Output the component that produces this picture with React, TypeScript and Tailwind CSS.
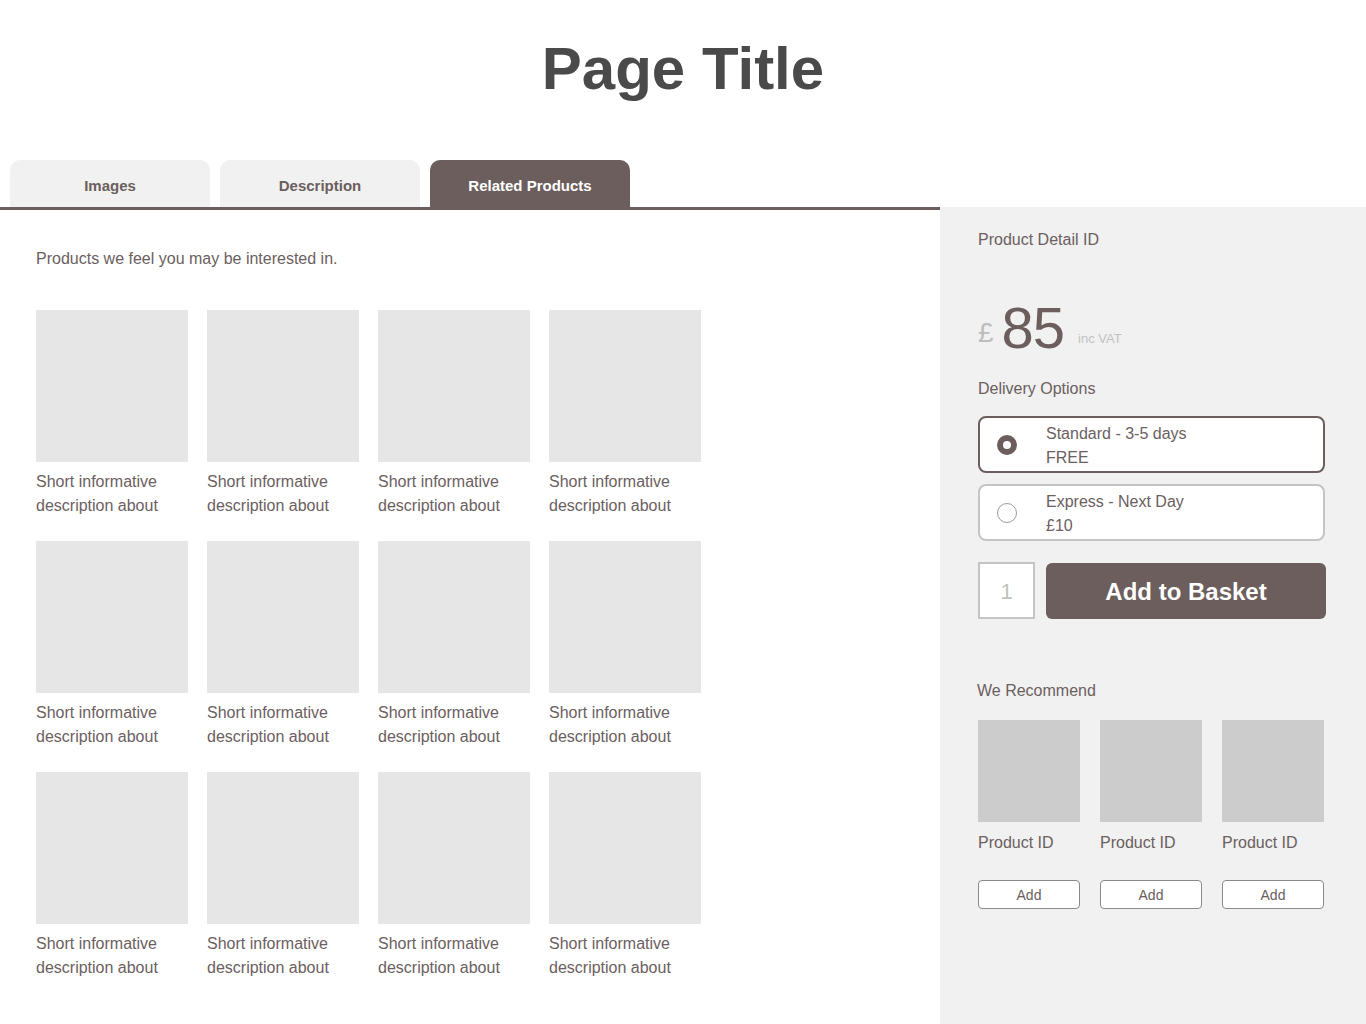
import React from "react";

const tabs = ["Images", "Description", "Related Products"];
const products = Array.from({ length: 12 }, (_, i) => i);
const recommended = [0, 1, 2];

export default function App() {
  return (
    <div
      className="min-h-screen flex flex-col bg-white text-[#6b605f]"
      style={{ fontFamily: '"Liberation Sans", Arial, sans-serif' }}
    >
      {/* Header */}
      <h1 className="pt-[39px] text-center text-[60px] leading-[60px] font-bold text-[#4a4a4a]">
        Page Title
      </h1>

      <div className="flex flex-1 mt-[61px]">
        {/* Left column */}
        <div className="w-[940px] flex flex-col">
          <div className="flex gap-[10px] pl-[10px] h-[47px]">
            {tabs.map((t, i) => (
              <div
                key={t}
                className={`w-[200px] rounded-t-[10px] flex items-center justify-center pt-[6px] text-[15px] font-bold ${
                  i === 2 ? "bg-[#6b5e5d] text-white" : "bg-[#f1f1f1] text-[#6b5e5d]"
                }`}
              >
                {t}
              </div>
            ))}
          </div>
          <div className="border-t-[3px] border-[#6b5e5d] pl-[36px] pt-[37px] pb-10">
            <p className="text-[16px] leading-[24px]">Products we feel you may be interested in.</p>
            <div className="mt-[39px] grid grid-cols-[repeat(4,152px)] gap-x-[19px] gap-y-[23px]">
              {products.map((p) => (
                <div key={p}>
                  <div className="w-[152px] h-[152px] bg-[#e6e6e6]" />
                  <p className="mt-[8px] text-[16px] leading-[24px]">
                    Short informative description about
                  </p>
                </div>
              ))}
            </div>
          </div>
        </div>

        {/* Right panel */}
        <aside className="flex-1 mt-[47px] bg-[#f1f1f1] pl-[38px] pr-[40px] pt-[21px]">
          <p className="text-[16px] leading-[24px]">Product Detail ID</p>

          <div className="mt-[47px] flex items-baseline h-[58px]">
            <span className="relative -top-[6px] text-[28px] leading-none text-[#bdbdbd] mr-[8px]">£</span>
            <span className="text-[58px] leading-[58px] font-light text-[#6b5e5d] tracking-[-1px]">85</span>
            <span className="relative -top-[5px] ml-[14px] text-[13px] leading-none text-[#c2c2c2]">inc VAT</span>
          </div>

          <p className="mt-[20px] text-[16px] leading-[24px]">Delivery Options</p>

          <div className="mt-[15px] flex flex-col gap-[11px] w-[347px]">
            <label className="h-[57px] bg-white border-2 border-[#6b5e5d] rounded-[8px] flex items-center pl-[17px]">
              <span className="w-[20px] h-[20px] rounded-full border-[6px] border-[#6b5e5d] bg-white" />
              <span className="ml-[29px] pt-[3px] text-[16px] leading-[24px]">
                Standard - 3-5 days
                <br />
                FREE
              </span>
            </label>
            <label className="h-[57px] bg-white border-2 border-[#c4c4c4] rounded-[8px] flex items-center pl-[17px]">
              <span className="w-[20px] h-[20px] rounded-full border-[1.5px] border-[#9a9a9a] bg-white" />
              <span className="ml-[29px] pt-[3px] text-[16px] leading-[24px]">
                Express - Next Day
                <br />
                £10
              </span>
            </label>
          </div>

          <div className="mt-[21px] flex gap-[11px] items-start">
            <div className="w-[57px] h-[57px] bg-white border-2 border-[#c4c4c4] flex items-center justify-center pt-[2px] text-[22px] text-[#c0c0c0]">
              1
            </div>
            <button className="mt-[1px] w-[280px] h-[56px] rounded-[6px] bg-[#6b5e5d] pt-[2px] text-white text-[24px] font-bold">
              Add to Basket
            </button>
          </div>

          <p className="mt-[60px] -ml-[1px] text-[16px] leading-[24px]">We Recommend</p>

          <div className="mt-[17px] flex gap-[20px]">
            {recommended.map((r) => (
              <div key={r} className="w-[102px]">
                <div className="w-[102px] h-[102px] bg-[#cccccc]" />
                <p className="mt-[9px] text-[16px] leading-[24px]">Product ID</p>
                <button className="mt-[25px] w-[102px] h-[29px] bg-white border border-[#8a8a8a] rounded-[4px] pt-[1px] text-[14px]">
                  Add
                </button>
              </div>
            ))}
          </div>
        </aside>
      </div>
    </div>
  );
}
